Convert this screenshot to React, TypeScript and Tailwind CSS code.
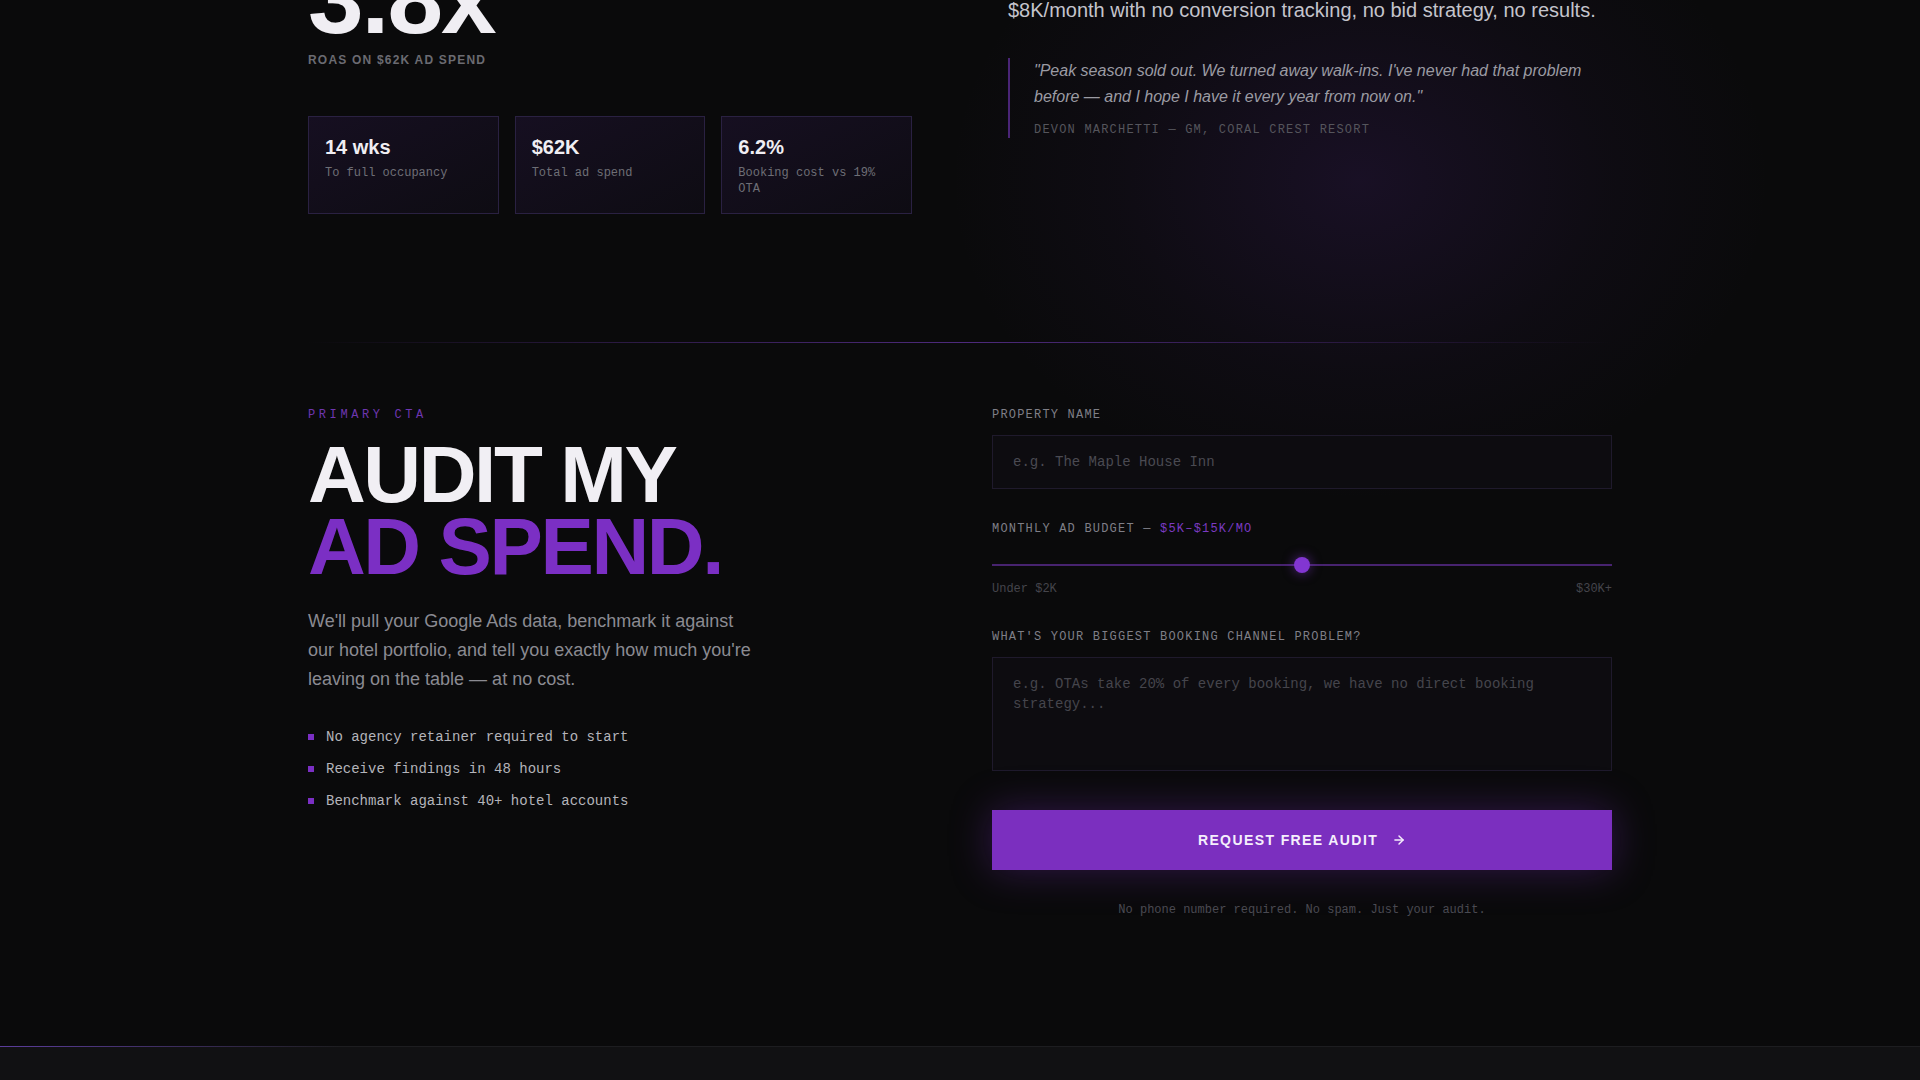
import { ArrowRight } from "lucide-react";

const stats = [
  { value: "14 wks", label: "To full occupancy" },
  { value: "$62K", label: "Total ad spend" },
  { value: "6.2%", label: "Booking cost vs 19% OTA" },
];

const perks = [
  "No agency retainer required to start",
  "Receive findings in 48 hours",
  "Benchmark against 40+ hotel accounts",
];

export default function App() {
  return (
    <div className="relative h-screen overflow-hidden bg-[#0a0a0b] font-['Liberation_Sans',Arial,sans-serif] text-white">
      {/* soft violet glow behind the testimonial */}
      <div className="pointer-events-none absolute left-[950px] top-[-140px] h-[640px] w-[820px] bg-[radial-gradient(closest-side,rgba(84,40,140,0.2),rgba(84,40,140,0.06)_60%,transparent)]" />

      {/* case study results */}
      <section className="relative mx-auto -mt-[52px] max-w-[1400px] px-12 pb-32">
        <div className="grid grid-cols-2 gap-24">
          <div>
            <div className="text-[100px] font-bold leading-none tracking-[-0.02em] text-[#f0eef3]">
              3.8x
            </div>
            <div className="mt-1 text-xs font-bold tracking-[0.1em] text-[#6b6b72]">
              ROAS ON $62K AD SPEND
            </div>
            <div className="mt-12 grid grid-cols-3 gap-4">
              {stats.map((s) => (
                <div
                  key={s.value}
                  className="border border-[#2a2142] bg-gradient-to-br from-[#160f21] to-[#0e0c13] p-4"
                >
                  <div className="text-xl font-bold text-[#f0eef3]">{s.value}</div>
                  <div className="mt-1 font-['Liberation_Mono',monospace] text-xs text-[#6e6e76]">
                    {s.label}
                  </div>
                </div>
              ))}
            </div>
          </div>

          <div className="pt-[46px]">
            <p className="text-xl leading-8 text-[#c4c4cc]">
              $8K/month with no conversion tracking, no bid strategy, no results.
            </p>
            <blockquote className="mt-8 border-l-2 border-[#4a2577] pl-6">
              <p className="text-base italic leading-[26px] text-[#9b9ba3]">
                "Peak season sold out. We turned away walk-ins. I've never had that problem
                before — and I hope I have it every year from now on."
              </p>
              <p className="mt-3 font-['Liberation_Mono',monospace] text-xs tracking-[0.1em] text-[#55555c]">
                DEVON MARCHETTI — GM, CORAL CREST RESORT
              </p>
            </blockquote>
          </div>
        </div>
      </section>

      <div className="relative mx-auto max-w-[1400px] px-12">
        <div className="h-px bg-gradient-to-r from-transparent via-[#4e2a7e] to-transparent" />
      </div>

      {/* audit request */}
      <section className="relative mx-auto max-w-[1400px] px-12 pb-32 pt-16">
        <div className="grid grid-cols-2 gap-16">
          <div>
            <p className="font-['Liberation_Mono',monospace] text-xs tracking-[0.3em] text-[#6e36b0]">
              PRIMARY CTA
            </p>
            <h2 className="mt-4 text-[80px] font-bold leading-[0.9] tracking-[-0.03em]">
              <span className="block text-[#f1eff4]">AUDIT MY</span>
              <span className="block text-[#7b2fc4]">AD SPEND.</span>
            </h2>
            <p className="mt-6 max-w-md text-lg leading-[1.6] text-[#8b8b92]">
              We'll pull your Google Ads data, benchmark it against our hotel portfolio, and
              tell you exactly how much you're leaving on the table — at no cost.
            </p>
            <ul className="mt-[34px] space-y-3 font-['Liberation_Mono',monospace] text-sm text-[#b4b4ba]">
              {perks.map((p) => (
                <li key={p} className="flex items-center gap-3">
                  <span className="h-1.5 w-1.5 bg-[#7b2fc4]" />
                  {p}
                </li>
              ))}
            </ul>
          </div>

          <form className="font-['Liberation_Mono',monospace]" onSubmit={(e) => e.preventDefault()}>
            <label className="mb-3 block text-xs tracking-[0.1em] text-[#7f7f87]">
              PROPERTY NAME
            </label>
            <input
              type="text"
              placeholder="e.g. The Maple House Inn"
              className="block w-full border border-[#1f1a2c] bg-[#0d0c10] px-5 py-4 text-sm leading-5 text-white outline-none placeholder:text-[#4a4a52]"
            />

            <label className="mt-8 block text-xs tracking-[0.1em] text-[#7f7f87]">
              MONTHLY AD BUDGET — <span className="text-[#7b3ac2]">$5K–$15K/MO</span>
            </label>
            <div className="relative mt-5 h-4">
              <div className="absolute inset-x-0 top-[7px] h-0.5 bg-[#47236f]" />
              <div className="absolute left-1/2 top-0 h-4 w-4 -translate-x-1/2 rounded-full bg-[#8236d1] shadow-[0_0_12px_rgba(130,54,209,0.6)]" />
            </div>
            <div className="mt-2 flex justify-between text-xs text-[#45454b]">
              <span>Under $2K</span>
              <span>$30K+</span>
            </div>

            <label className="mb-3 mt-8 block text-xs tracking-[0.1em] text-[#7f7f87]">
              WHAT'S YOUR BIGGEST BOOKING CHANNEL PROBLEM?
            </label>
            <textarea
              rows={4}
              placeholder="e.g. OTAs take 20% of every booking, we have no direct booking strategy..."
              className="block w-full resize-none border border-[#1f1a2c] bg-[#0d0c10] px-5 py-4 text-sm leading-5 text-white outline-none placeholder:text-[#45454c]"
            />

            <button
              type="submit"
              className="mt-[39px] flex h-[60px] w-full items-center justify-center gap-3.5 bg-[#7b2fbf] font-['Liberation_Sans',Arial,sans-serif] text-sm font-bold tracking-[0.1em] text-[#f5eefc] shadow-[0_0_40px_rgba(123,47,191,0.35)]"
            >
              REQUEST FREE AUDIT
              <ArrowRight size={14} strokeWidth={2.5} />
            </button>
            <p className="mt-8 text-center text-xs text-[#4a4a52]">
              No phone number required. No spam. Just your audit.
            </p>
          </form>
        </div>
      </section>

      <footer className="relative h-[200px] border-t border-[#1d1d20] bg-[#111113]">
        <div className="absolute left-0 top-[-1px] h-px w-[340px] bg-gradient-to-r from-[#5b3d9c] to-transparent" />
      </footer>
    </div>
  );
}
